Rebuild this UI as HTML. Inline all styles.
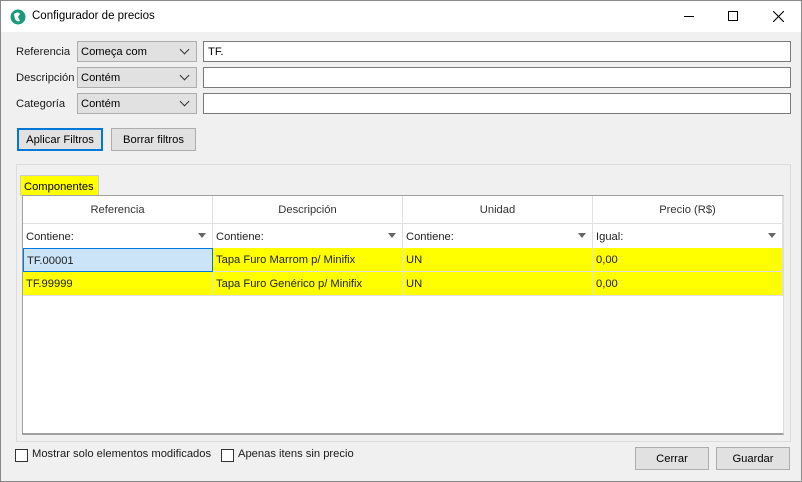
<!DOCTYPE html>
<html><head><style>
*{box-sizing:border-box;margin:0;padding:0}
body{width:802px;height:482px;font-family:"Liberation Sans",sans-serif;font-size:11.2px;color:#000;background:#f0f0f0;position:relative;overflow:hidden}
.win{position:absolute;left:0;top:0;width:802px;height:482px;border:1px solid #888;background:#f0f0f0}
.title{position:absolute;left:0;top:0;width:800px;height:31px;background:#fff}
.a{position:absolute}
.lbl{position:absolute;font-size:11.2px;color:#1a1a1a}
.sel{position:absolute;height:21px;background:#e1e1e1;border:1px solid #adadad;padding:4px 0 0 3px;font-size:11.2px}
.sel:after{content:"";position:absolute;right:8px;top:4px;width:6px;height:6px;border-right:1px solid #333;border-bottom:1px solid #333;transform:rotate(45deg)}
.inp{position:absolute;height:21px;background:#fff;border:1px solid #7a7a7a;padding:4px 4px;font-size:11.2px}
.btn{position:absolute;height:23px;background:#e1e1e1;border:1px solid #adadad;text-align:center;line-height:22px;font-size:11.2px}
.cell{position:absolute;height:24px;border-right:1px solid #e0e0e0;border-bottom:1px solid #e0e0e0;padding:6px 3px;font-size:11.2px;color:#222;white-space:nowrap}
.hd{text-align:center;color:#333;padding-top:8px;height:28px}
.flt{height:25px;padding-top:7px}
.flt i{position:absolute;right:6px;top:9px;width:0;height:0;border-left:4px solid transparent;border-right:4px solid transparent;border-top:5px solid #666}
.y{background:#ffff00}
.cb{position:absolute;width:13px;height:13px;border:1px solid #333;background:#fff}
</style></head><body>
<div class="win">
<div class="title">
<svg class="a" style="left:9px;top:8px" width="16" height="16" viewBox="0 0 16 16"><circle cx="8" cy="8" r="7.5" fill="#1a9a7a"/><path d="M4 5c2-2 5-2 6 0l-2 3 2 4c-2 1-4 0-5-2z" fill="#fff"/></svg>
<div class="a" style="left:31px;top:9px;font-size:11.5px">Configurador de precios</div>
<div class="a" style="left:683px;top:15px;width:10px;height:1px;background:#000"></div>
<div class="a" style="left:727px;top:10px;width:10px;height:10px;border:1px solid #000"></div>
<svg class="a" style="left:772px;top:10px" width="11" height="11"><path d="M0 0L11 11M11 0L0 11" stroke="#000" stroke-width="1.1"/></svg>
</div>
<div class="lbl" style="left:15px;top:45px">Referencia</div>
<div class="lbl" style="left:15px;top:71px">Descripción</div>
<div class="lbl" style="left:15px;top:97px">Categoría</div>
<div class="sel" style="left:76px;top:40px;width:120px">Começa com</div>
<div class="sel" style="left:76px;top:66px;width:120px">Contém</div>
<div class="sel" style="left:76px;top:92px;width:120px">Contém</div>
<div class="inp" style="left:202px;top:40px;width:588px">TF.</div>
<div class="inp" style="left:202px;top:66px;width:588px"></div>
<div class="inp" style="left:202px;top:92px;width:588px"></div>
<div class="btn" style="left:16px;top:127px;width:86px;border:2px solid #0078d7;line-height:20px">Aplicar Filtros</div>
<div class="btn" style="left:110px;top:127px;width:85px">Borrar filtros</div>
<div class="a" style="left:15px;top:163px;width:775px;height:278px;border:1px solid #dcdcdc"></div>
<div class="a" style="left:19px;top:174px;width:79px;height:21px;background:#ffff00;border:1px solid #ccc;border-bottom:none;padding:5px 0 0 3px;font-size:11.2px">Componentes</div>
<div class="a" style="left:21px;top:194px;width:762px;height:240px;background:#fff;border:1px solid #a0a0a0;border-right-color:#ddd;border-bottom:2px solid #a0a0a0"></div>
<div class="cell hd" style="left:22px;top:195px;width:190px">Referencia</div>
<div class="cell hd" style="left:212px;top:195px;width:190px">Descripción</div>
<div class="cell hd" style="left:402px;top:195px;width:190px">Unidad</div>
<div class="cell hd" style="left:592px;top:195px;width:190px">Precio (R$)</div>
<div class="cell flt" style="left:22px;top:223px;width:190px">Contiene:<i></i></div>
<div class="cell flt" style="left:212px;top:223px;width:190px">Contiene:<i></i></div>
<div class="cell flt" style="left:402px;top:223px;width:190px">Contiene:<i></i></div>
<div class="cell flt" style="left:592px;top:223px;width:190px">Igual:<i></i></div>
<div class="cell" style="left:22px;top:247px;width:190px;background:#cce4f7;border:1px solid #0078d7">TF.00001</div>
<div class="cell y" style="left:212px;top:247px;width:190px">Tapa Furo Marrom p/ Minifix</div>
<div class="cell y" style="left:402px;top:247px;width:190px">UN</div>
<div class="cell y" style="left:592px;top:247px;width:190px">0,00</div>
<div class="cell y" style="left:22px;top:271px;width:190px">TF.99999</div>
<div class="cell y" style="left:212px;top:271px;width:190px">Tapa Furo Genérico p/ Minifix</div>
<div class="cell y" style="left:402px;top:271px;width:190px">UN</div>
<div class="cell y" style="left:592px;top:271px;width:190px">0,00</div>
<div class="cb" style="left:14px;top:448px"></div>
<div class="lbl" style="left:31px;top:447px">Mostrar solo elementos modificados</div>
<div class="cb" style="left:220px;top:448px"></div>
<div class="lbl" style="left:237px;top:447px">Apenas itens sin precio</div>
<div class="btn" style="left:634px;top:446px;width:74px">Cerrar</div>
<div class="btn" style="left:715px;top:446px;width:74px">Guardar</div>
</div>
</body></html>
